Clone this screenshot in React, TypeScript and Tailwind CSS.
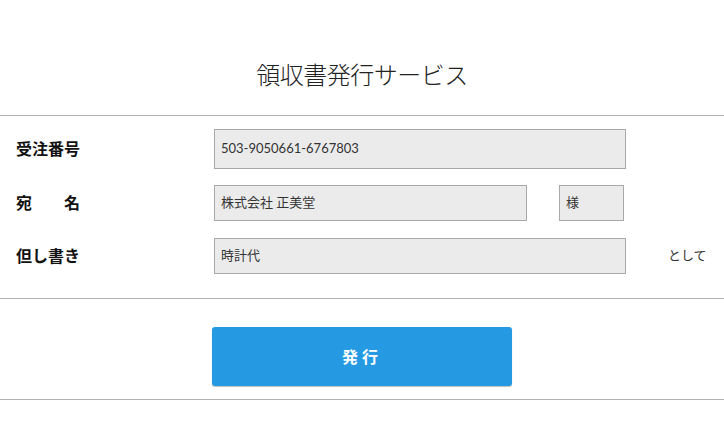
const jp = "font-['Lato','Noto_Sans_CJK_JP',sans-serif]";

function Field({ value, className }: { value: string; className: string }) {
  return (
    <div
      className={`flex items-center border border-[#a9a9a9] bg-[#ebebeb] px-[6px] text-[13px] text-[#333] ${className}`}
    >
      {value}
    </div>
  );
}

function Label({ children }: { children: React.ReactNode }) {
  return (
    <div className="w-[214px] shrink-0 pl-4 text-[16px] font-bold text-[#111]">
      {children}
    </div>
  );
}

export default function App() {
  return (
    <div className={`min-h-[446px] w-[724px] bg-white ${jp}`}>
      <header className="flex h-[115px] items-center justify-center pt-[34px]">
        <h1 className="text-[24px] font-light tracking-[-0.5px] text-[#222]">
          領収書発行サービス
        </h1>
      </header>

      <section className="border-t border-b border-[#b0b0b0] pt-[13px] pb-[24px]">
        <div className="flex items-center">
          <Label>受注番号</Label>
          <Field value="503-9050661-6767803" className="h-[40px] w-[412px]" />
        </div>
        <div className="mt-4 flex items-center">
          <Label>
            <span className="flex w-16 justify-between">
              <span>宛</span>
              <span>名</span>
            </span>
          </Label>
          <Field value="株式会社 正美堂" className="h-[36px] w-[313px]" />
          <Field value="様" className="ml-[32px] h-[36px] w-[65px]" />
        </div>
        <div className="mt-[17px] flex items-center">
          <Label>但し書き</Label>
          <Field value="時計代" className="h-[36px] w-[412px]" />
          <span className="ml-[42px] text-[13px] text-[#333]">として</span>
        </div>
      </section>

      <section className="flex justify-center border-b border-[#b0b0b0] pt-[28px] pb-[13px]">
        <button
          type="button"
          className="h-[59px] w-[300px] rounded-[3px] bg-[#259ae3] text-[16px] font-bold tracking-[4px] text-white shadow-[0_1px_1px_rgba(0,0,0,0.25)]"
        >
          発行
        </button>
      </section>
    </div>
  );
}
